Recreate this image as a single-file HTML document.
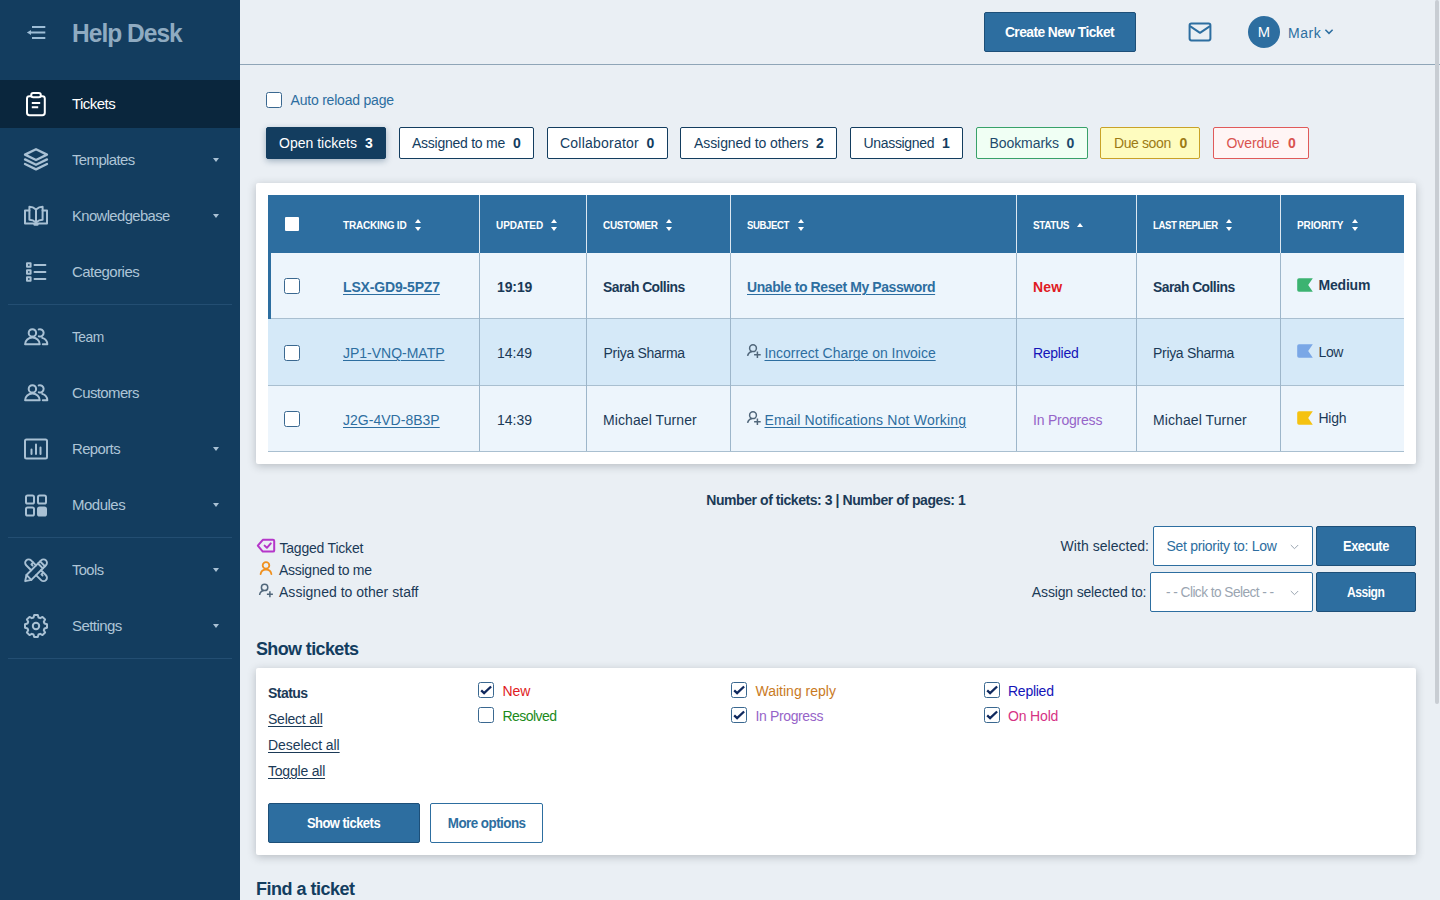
<!DOCTYPE html>
<html lang="en">
<head>
<meta charset="utf-8">
<title>Help Desk - Tickets</title>
<style>
*{box-sizing:border-box;margin:0;padding:0}
html,body{width:1440px;height:900px;overflow:hidden}
body{font-family:"Liberation Sans",sans-serif;font-size:14px;color:#1b3a57;background:#eaeff4;position:relative}
.abs{position:absolute}
.x{display:inline-block;white-space:nowrap}
/* ---------- sidebar ---------- */
#side{position:absolute;left:0;top:0;width:240px;height:900px;background:#133d5f}
#side .logo{position:absolute;left:72px;top:16px;font-size:26px;font-weight:bold;color:#8fabc1;line-height:34px;white-space:nowrap}
#side .item{position:absolute;left:0;width:240px;height:48px;color:#aec5d7;font-size:15px;line-height:48px}
#side .item>span{position:absolute;left:72px;top:0;white-space:nowrap}
#side .item.on{background:#0a263d;color:#fff}
#side .item svg{position:absolute;left:22px;top:10px;width:28px;height:28px;fill:none;stroke:#a9c1d4;stroke-width:2;stroke-linecap:round;stroke-linejoin:round}
#side .item.on svg{stroke:#fff}
#side .car{position:absolute;left:213px;top:22px;width:0;height:0;border-left:3.5px solid transparent;border-right:3.5px solid transparent;border-top:4px solid #a9c1d4}
#side .sep{position:absolute;left:8px;width:224px;height:1px;background:#234e72}
/* ---------- header ---------- */
#hdr{position:absolute;left:240px;top:0;width:1200px;height:65px;border-bottom:1px solid #8fa5b7}
.btn{position:absolute;background:#2d6ea0;border:1px solid #1d4f78;color:#fff;font-weight:bold;font-size:14px;text-align:center;border-radius:2px;white-space:nowrap}
/* ---------- main ---------- */
.cb{position:absolute;width:16px;height:16px;background:#fff;border:1px solid #3a6890;border-radius:2.5px}
.fb{position:absolute;top:127px;height:32px;border:1px solid #133d5f;background:#fff;color:#133d5f;font-size:14px;line-height:30px;border-radius:2px;white-space:nowrap}
.fb .x{position:absolute;top:0}
.fb b{position:absolute;top:0}
.card{position:absolute;background:#fff;border-radius:2px;box-shadow:0 2px 8px rgba(30,38,46,.25)}
#tbl{position:absolute;left:268px;top:195px;width:1136px;height:257px}
#tbl .th{position:absolute;left:0;top:0;width:1136px;height:58px;background:#2d6ea0}
#tbl .h{position:absolute;top:1px;height:58px;line-height:60px;color:#fff;font-size:10px;font-weight:bold;white-space:nowrap}
#tbl .row{position:absolute;left:0;width:1136px;border-bottom:1px solid #a9bfd0}
#tbl .c{position:absolute;white-space:nowrap;font-size:14px;line-height:20px;color:#1b3a57}
#tbl a{color:#2d6ea0}
#tbl a .x,.lnk .x{text-decoration:underline;text-underline-offset:2px;text-decoration-thickness:1px}
#tbl .vl{position:absolute;top:0;width:1px;background:#9db6ca}
#tbl .vh{position:absolute;top:0;width:1px;height:58px;background:#dbe7f1}
.srt{position:absolute;top:24px;width:7px;height:12px}
.srt:before{content:"";position:absolute;left:0;top:0;border-left:3.5px solid transparent;border-right:3.5px solid transparent;border-bottom:4.5px solid #fff}
.srt:after{content:"";position:absolute;left:0;top:7.5px;border-left:3.5px solid transparent;border-right:3.5px solid transparent;border-top:4.5px solid #fff}
.flag{position:absolute;width:16px;height:14px}
.t14{position:absolute;font-size:14px;line-height:20px;white-space:nowrap;color:#1b3a57}
.sel{position:absolute;height:40px;background:#fff;border:1px solid #2d6ea0;border-radius:2px;font-size:14px;line-height:38px;white-space:nowrap}
.sel .x{position:absolute;top:0}
.sel svg{position:absolute;top:16px}
.h2{position:absolute;font-size:18px;font-weight:bold;color:#133d5f;white-space:nowrap;line-height:24px}
.lnk{position:absolute;left:268px;font-size:14px;color:#1b3a57;text-decoration:underline;text-underline-offset:2px;line-height:20px;white-space:nowrap}
.ck{position:absolute;width:16px;height:16px;background:#fff;border:1px solid #3a6890;border-radius:2.5px}
.ck svg{position:absolute;left:-1px;top:-1px;width:16px;height:16px}
.sl{position:absolute;font-size:14px;line-height:20px;white-space:nowrap}
</style>
</head>
<body>
<div id="side">
  <svg class="abs" style="left:24px;top:20px" width="24" height="24" viewBox="0 0 24 24" fill="none" stroke="#9dbdd6" stroke-width="2" stroke-linecap="butt"><path d="M8 7H21.3M6 12.5H21.3M8 18H21.3"/><path d="M7 9.9V15.1L2.9 12.5Z" fill="#9dbdd6" stroke="none"/></svg>
  <div class="logo"><span class="x" style="letter-spacing:-1.02px;transform:scaleX(0.942);transform-origin:left center;margin-right:1.02px">Help Desk</span></div>

  <div class="item on" style="top:80px"><svg viewBox="0 0 28 28" style="top:9px"><rect x="5" y="7.2" width="17.8" height="19" rx="2.4"/><rect x="9.2" y="4" width="9.6" height="4.3" rx="2" fill="#0a263d"/><path d="M9.8 14H18.2M9.8 18.2H16.2" stroke-linecap="butt"/></svg><span><span class="x" style="letter-spacing:-0.54px;margin-right:0.54px">Tickets</span></span></div>
  <div class="item" style="top:136px"><svg viewBox="0 0 28 28"><path d="M14 3.2L25 8.6L14 14L3 8.6Z" stroke-width="2.3"/><path d="M3 13.4L14 18.8L25 13.4" stroke-width="2.3"/><path d="M3 18L14 23.4L25 18" stroke-width="2.3"/></svg><span><span class="x" style="letter-spacing:-0.59px;transform:scaleX(0.994);transform-origin:left center;margin-right:0.59px">Templates</span></span><i class="car"></i></div>
  <div class="item" style="top:192px"><svg viewBox="0 0 28 28"><path d="M14 7.5Q11 4.8 7.4 4.8V17.8Q11 17.8 14 20.4Q17 17.8 20.6 17.8V4.8Q17 4.8 14 7.5ZM14 7.5V20.4"/><path d="M7.4 8.4H3V21.6H25V8.4H20.6"/><path d="M12.6 22.6H15.4" stroke-width="2.4"/></svg><span><span class="x" style="letter-spacing:-0.59px;transform:scaleX(0.986);transform-origin:left center;margin-right:0.59px">Knowledgebase</span></span><i class="car"></i></div>
  <div class="item" style="top:248px"><svg viewBox="0 0 28 28"><rect x="5" y="5.2" width="3.6" height="3.6"/><rect x="5" y="12.2" width="3.6" height="3.6"/><rect x="5" y="19.2" width="3.6" height="3.6"/><path d="M12.5 7H23.4M12.5 14H23.4M12.5 21H23.4"/></svg><span><span class="x" style="letter-spacing:-0.54px;margin-right:0.54px">Categories</span></span></div>
  <div class="sep" style="top:304px"></div>
  <div class="item" style="top:313px"><svg viewBox="0 0 28 28"><circle cx="10.4" cy="9.9" r="3.7"/><path d="M3.1 21.3A7.3 6.8 0 0 1 17.7 21.3Z"/><path d="M16.7 6.4A3.7 3.7 0 1 1 16.8 13.4"/><path d="M20.2 14.9A7.3 6.8 0 0 1 25.3 21.3H20.8"/></svg><span><span class="x" style="letter-spacing:-0.59px;transform:scaleX(0.922);transform-origin:left center;margin-right:0.59px">Team</span></span></div>
  <div class="item" style="top:369px"><svg viewBox="0 0 28 28"><circle cx="10.4" cy="9.9" r="3.7"/><path d="M3.1 21.3A7.3 6.8 0 0 1 17.7 21.3Z"/><path d="M16.7 6.4A3.7 3.7 0 1 1 16.8 13.4"/><path d="M20.2 14.9A7.3 6.8 0 0 1 25.3 21.3H20.8"/></svg><span><span class="x" style="letter-spacing:-0.59px;transform:scaleX(0.995);transform-origin:left center;margin-right:0.59px">Customers</span></span></div>
  <div class="item" style="top:425px"><svg viewBox="0 0 28 28"><rect x="3" y="4.5" width="22" height="19" rx="1.5"/><path d="M9.5 19V14.5M14 19V9.5M18.5 19V12.5"/></svg><span><span class="x" style="letter-spacing:-0.59px;transform:scaleX(0.992);transform-origin:left center;margin-right:0.59px">Reports</span></span><i class="car"></i></div>
  <div class="item" style="top:481px"><svg viewBox="0 0 28 28"><rect x="4" y="4.5" width="8" height="8" rx="1.6"/><rect x="16" y="4.5" width="8" height="8" rx="1.6"/><rect x="4" y="16.5" width="8" height="8" rx="1.6"/><rect x="16" y="16.5" width="8" height="8" rx="1.6" fill="#a9c1d4"/></svg><span><span class="x" style="letter-spacing:-0.50px;margin-right:0.50px">Modules</span></span><i class="car"></i></div>
  <div class="sep" style="top:537px"></div>
  <div class="item" style="top:546px"><svg viewBox="0 0 28 28"><g transform="translate(0.7 0.9) scale(0.955)"><path d="M2.6 25.4L3.95 18.95L19.25 3.65A3.6 3.6 0 0 1 24.35 8.75L9.05 24.05Z"/><path d="M3.95 18.95L9.05 24.05"/><path d="M16 6.9L21.1 12M18.2 4.7L23.3 9.8"/><path d="M14 8.9L8.75 3.65A3.6 3.6 0 0 0 3.65 8.75L8.9 14"/><path d="M19.1 14L24.35 19.25A3.6 3.6 0 0 1 19.25 24.35L14 19.1"/><path d="M11 5.9L9.1 7.8L10.3 9"/><path d="M21.5 16.4L19.6 18.3L20.8 19.5"/></g></svg><span><span class="x" style="letter-spacing:-0.59px;transform:scaleX(0.979);transform-origin:left center;margin-right:0.59px">Tools</span></span><i class="car"></i></div>
  <div class="item" style="top:602px"><svg viewBox="0 0 28 28"><circle cx="14" cy="14" r="3.2"/><path d="M11.5 5.5L12.2 3.0L15.8 3.0L16.5 5.5L18.2 6.2L20.5 4.9L23.1 7.5L21.8 9.8L22.5 11.5L25.0 12.2L25.0 15.8L22.5 16.5L21.8 18.2L23.1 20.5L20.5 23.1L18.2 21.8L16.5 22.5L15.8 25.0L12.2 25.0L11.5 22.5L9.8 21.8L7.5 23.1L4.9 20.5L6.2 18.2L5.5 16.5L3.0 15.8L3.0 12.2L5.5 11.5L6.2 9.8L4.9 7.5L7.5 4.9L9.8 6.2Z"/></svg><span><span class="x" style="letter-spacing:-0.56px;margin-right:0.56px">Settings</span></span><i class="car"></i></div>
  <div class="sep" style="top:658px"></div>
</div>
<div id="hdr">
  <div class="btn" style="left:744px;top:12px;width:152px;height:40px;line-height:38px"><span class="x" style="letter-spacing:-0.55px;transform:scaleX(0.983);transform-origin:center center;margin-right:0.55px">Create New Ticket</span></div>
  <svg class="abs" style="left:948px;top:20px" width="24" height="24" viewBox="0 0 24 24" fill="none" stroke="#2d6ea0" stroke-width="2" stroke-linejoin="round"><rect x="1.6" y="3.6" width="20.8" height="16.8" rx="1.8"/><path d="M2 6.2L12 12.8L22 6.2"/></svg>
  <div class="abs" style="left:1008px;top:16px;width:32px;height:32px;border-radius:50%;background:#2d6ea0;color:#fff;text-align:center;line-height:33px;font-size:14px"><span class="x" style="letter-spacing:0.60px;transform:scaleX(1.054);transform-origin:center center;margin-right:-0.60px">M</span></div>
  <div class="abs" style="left:1048px;top:24px;color:#2d6ea0;font-size:14px;line-height:18px"><span class="x" style="letter-spacing:0.53px;margin-right:-0.53px">Mark</span></div>
  <svg class="abs" style="left:1084px;top:28px" width="10" height="8" viewBox="0 0 10 8" fill="none" stroke="#2d6ea0" stroke-width="1.5"><path d="M1.4 1.8L5 5.4L8.6 1.8"/></svg>
</div>

<!-- auto reload -->
<div class="cb" style="left:266px;top:92px"></div>
<div class="t14" style="left:290.5px;top:90px;color:#2d6ea0"><span class="x" style="letter-spacing:-0.21px;margin-right:0.21px">Auto reload page</span></div>

<!-- filter buttons -->
<div class="fb" style="left:266px;width:120px;background:#133d5f;color:#fff;box-shadow:0 2px 6px rgba(19,61,95,.35)"><span style="position:absolute;left:12px;top:0"><span class="x" style="letter-spacing:0.01px;margin-right:-0.01px">Open tickets</span></span><b style="left:98px">3</b></div>
<div class="fb" style="left:399px;width:135px"><span style="position:absolute;left:12px;top:0"><span class="x" style="letter-spacing:-0.25px;margin-right:0.25px">Assigned to me</span></span><b style="left:113px">0</b></div>
<div class="fb" style="left:547px;width:121px"><span style="position:absolute;left:12px;top:0"><span class="x" style="letter-spacing:0.22px;margin-right:-0.22px">Collaborator</span></span><b style="left:98.5px">0</b></div>
<div class="fb" style="left:680px;width:157px"><span style="position:absolute;left:13px;top:0"><span class="x" style="letter-spacing:-0.08px;margin-right:0.08px">Assigned to others</span></span><b style="left:135px">2</b></div>
<div class="fb" style="left:850px;width:113px"><span style="position:absolute;left:12.5px;top:0"><span class="x" style="letter-spacing:-0.32px;margin-right:0.32px">Unassigned</span></span><b style="left:91px">1</b></div>
<div class="fb" style="left:976px;width:112px;border-color:#38a169;background:#f0fff4;color:#1d4a6c"><span style="position:absolute;left:12.5px;top:0"><span class="x" style="letter-spacing:-0.08px;margin-right:0.08px">Bookmarks</span></span><b style="left:89.5px">0</b></div>
<div class="fb" style="left:1100px;width:100px;border-color:#c9a227;background:#fefcbf;color:#9c7a14"><span style="position:absolute;left:13px;top:0"><span class="x" style="letter-spacing:-0.39px;margin-right:0.39px">Due soon</span></span><b style="left:78.5px">0</b></div>
<div class="fb" style="left:1213px;width:96px;border-color:#e05a5a;background:#fff5f5;color:#d9534f"><span style="position:absolute;left:12.5px;top:0"><span class="x" style="letter-spacing:-0.10px;margin-right:0.10px">Overdue</span></span><b style="left:74px">0</b></div>

<!-- ticket table -->
<div class="card" style="left:256px;top:183px;width:1160px;height:281px"></div>
<div id="tbl">
  <div class="th"></div>
  <div class="row" style="top:58px;height:66px;background:#edf5fc"></div>
  <div class="row" style="top:124px;height:67px;background:#d5e9f8"></div>
  <div class="row" style="top:191px;height:66px;background:#edf5fc"></div>
  <div class="abs" style="left:0;top:58px;width:3px;height:66px;background:#2d6ea0"></div>
  <div class="vl" style="left:211px;height:256px"></div><div class="vl" style="left:318px;height:256px"></div><div class="vl" style="left:462px;height:256px"></div><div class="vl" style="left:748px;height:256px"></div><div class="vl" style="left:868px;height:256px"></div><div class="vl" style="left:1012px;height:256px"></div>
  <div class="vh" style="left:211px"></div><div class="vh" style="left:318px"></div><div class="vh" style="left:462px"></div><div class="vh" style="left:748px"></div><div class="vh" style="left:868px"></div><div class="vh" style="left:1012px"></div>

  <div class="abs" style="left:17px;top:22px;width:14px;height:14px;background:#fff;border-radius:1px"></div>
  <div class="h" style="left:75px"><span class="x" style="letter-spacing:-0.19px;margin-right:0.19px">TRACKING ID</span></div><i class="srt" style="left:146.5px"></i>
  <div class="h" style="left:228px"><span class="x" style="letter-spacing:-0.08px;margin-right:0.08px">UPDATED</span></div><i class="srt" style="left:282.5px"></i>
  <div class="h" style="left:335px"><span class="x" style="letter-spacing:-0.29px;margin-right:0.29px">CUSTOMER</span></div><i class="srt" style="left:397.5px"></i>
  <div class="h" style="left:479px"><span class="x" style="letter-spacing:-0.39px;transform:scaleX(0.956);transform-origin:left center;margin-right:0.39px">SUBJECT</span></div><i class="srt" style="left:529.5px"></i>
  <div class="h" style="left:764.5px"><span class="x" style="letter-spacing:-0.39px;transform:scaleX(0.993);transform-origin:left center;margin-right:0.39px">STATUS</span></div><i class="abs" style="left:808.5px;top:28px;border-left:3.5px solid transparent;border-right:3.5px solid transparent;border-bottom:4.5px solid #fff"></i>
  <div class="h" style="left:885px"><span class="x" style="letter-spacing:-0.39px;transform:scaleX(0.959);transform-origin:left center;margin-right:0.39px">LAST REPLIER</span></div><i class="srt" style="left:957.5px"></i>
  <div class="h" style="left:1029px"><span class="x" style="letter-spacing:-0.13px;margin-right:0.13px">PRIORITY</span></div><i class="srt" style="left:1083.5px"></i>

  <!-- row 1 -->
  <div class="cb" style="left:16px;top:83px"></div>
  <div class="c" style="left:75px;top:82px;font-weight:bold"><a><span class="x" style="letter-spacing:-0.16px;margin-right:0.16px">LSX-GD9-5PZ7</span></a></div>
  <div class="c" style="left:229px;top:82px;font-weight:bold"><span class="x" style="letter-spacing:-0.10px;margin-right:0.10px">19:19</span></div>
  <div class="c" style="left:335px;top:82px;font-weight:bold"><span class="x" style="letter-spacing:-0.55px;transform:scaleX(0.991);transform-origin:left center;margin-right:0.55px">Sarah Collins</span></div>
  <div class="c" style="left:479px;top:82px;font-weight:bold"><a><span class="x" style="letter-spacing:-0.41px;margin-right:0.41px">Unable to Reset My Password</span></a></div>
  <div class="c" style="left:765px;top:82px;font-weight:bold;color:#e01b24"><span class="x" style="letter-spacing:0.20px;margin-right:-0.20px">New</span></div>
  <div class="c" style="left:885px;top:82px;font-weight:bold"><span class="x" style="letter-spacing:-0.55px;transform:scaleX(0.991);transform-origin:left center;margin-right:0.55px">Sarah Collins</span></div>
  <svg class="flag" style="left:1029px;top:83px" viewBox="0 0 16 14"><path d="M2 0.2H15.8L11.2 7L15.8 13.8H2Q0.2 13.8 0.2 12V2Q0.2 0.2 2 0.2Z" fill="#3cb371"/></svg>
  <div class="c" style="left:1050.5px;top:80px;font-weight:bold"><span class="x" style="letter-spacing:-0.20px;margin-right:0.20px">Medium</span></div>
  <!-- row 2 -->
  <div class="cb" style="left:16px;top:150px"></div>
  <div class="c" style="left:75px;top:148px"><a><span class="x" style="letter-spacing:-0.01px;margin-right:0.01px">JP1-VNQ-MATP</span></a></div>
  <div class="c" style="left:229px;top:148px"><span class="x" style="letter-spacing:-0.01px;margin-right:0.01px">14:49</span></div>
  <div class="c" style="left:335.5px;top:148px"><span class="x" style="letter-spacing:-0.29px;margin-right:0.29px">Priya Sharma</span></div>
  <svg class="abs" style="left:478px;top:148px" width="16" height="16" viewBox="0 0 16 16" fill="none" stroke="#50667a" stroke-width="1.5" stroke-linecap="butt"><circle cx="7" cy="5.2" r="3.4"/><path d="M6 8.5Q2.4 9.2 1.6 12.9"/><path d="M11.4 8.5V15M8.1 11.75H14.7"/></svg>
  <div class="c" style="left:496.5px;top:148px"><a><span class="x" style="letter-spacing:-0.03px;margin-right:0.03px">Incorrect Charge on Invoice</span></a></div>
  <div class="c" style="left:765px;top:148px;color:#1414b8"><span class="x" style="letter-spacing:-0.30px;margin-right:0.30px">Replied</span></div>
  <div class="c" style="left:885px;top:148px"><span class="x" style="letter-spacing:-0.31px;margin-right:0.31px">Priya Sharma</span></div>
  <svg class="flag" style="left:1029px;top:149px" viewBox="0 0 16 14"><path d="M2 0.2H15.8L11.2 7L15.8 13.8H2Q0.2 13.8 0.2 12V2Q0.2 0.2 2 0.2Z" fill="#7aa7e6"/></svg>
  <div class="c" style="left:1050.5px;top:147px"><span class="x" style="letter-spacing:-0.39px;margin-right:0.39px">Low</span></div>
  <!-- row 3 -->
  <div class="cb" style="left:16px;top:216px"></div>
  <div class="c" style="left:75px;top:215px"><a><span class="x" style="letter-spacing:0.02px;margin-right:-0.02px">J2G-4VD-8B3P</span></a></div>
  <div class="c" style="left:229px;top:215px"><span class="x" style="letter-spacing:-0.01px;margin-right:0.01px">14:39</span></div>
  <div class="c" style="left:335px;top:215px"><span class="x" style="letter-spacing:0.09px;margin-right:-0.09px">Michael Turner</span></div>
  <svg class="abs" style="left:478px;top:215px" width="16" height="16" viewBox="0 0 16 16" fill="none" stroke="#50667a" stroke-width="1.5" stroke-linecap="butt"><circle cx="7" cy="5.2" r="3.4"/><path d="M6 8.5Q2.4 9.2 1.6 12.9"/><path d="M11.4 8.5V15M8.1 11.75H14.7"/></svg>
  <div class="c" style="left:496.5px;top:215px"><a><span class="x" style="letter-spacing:0.19px;margin-right:-0.19px">Email Notifications Not Working</span></a></div>
  <div class="c" style="left:765px;top:215px;color:#9664c8"><span class="x" style="letter-spacing:-0.22px;margin-right:0.22px">In Progress</span></div>
  <div class="c" style="left:885px;top:215px"><span class="x" style="letter-spacing:0.09px;margin-right:-0.09px">Michael Turner</span></div>
  <svg class="flag" style="left:1029px;top:216px" viewBox="0 0 16 14"><path d="M2 0.2H15.8L11.2 7L15.8 13.8H2Q0.2 13.8 0.2 12V2Q0.2 0.2 2 0.2Z" fill="#f5c211"/></svg>
  <div class="c" style="left:1050.5px;top:213px"><span class="x" style="letter-spacing:-0.27px;margin-right:0.27px">High</span></div>
</div>

<div class="t14" style="left:636px;top:490px;width:400px;text-align:center;font-weight:bold"><span class="x" style="letter-spacing:-0.44px;margin-right:0.44px">Number of tickets: 3 | Number of pages: 1</span></div>

<!-- legend -->
<svg class="abs" style="left:256px;top:538px" width="20" height="16" viewBox="0 0 20 16" fill="none" stroke="#b536c9" stroke-width="2" stroke-linejoin="round" stroke-linecap="round"><path d="M6.8 1.8H17Q18.2 1.8 18.2 3V12.4Q18.2 13.6 17 13.6H6.8L1.8 7.7Z"/><path d="M8.6 7.6L10.9 9.8L14.8 5.4"/></svg>
<svg class="abs" style="left:258px;top:560px" width="16" height="16" viewBox="0 0 16 16" fill="none" stroke="#f0901e" stroke-width="1.8" stroke-linecap="round"><circle cx="8" cy="5.4" r="3.3"/><path d="M2.6 14.2Q3.2 9.6 8 9.6Q12.8 9.6 13.4 14.2"/></svg>
<svg class="abs" style="left:258px;top:582px" width="16" height="16" viewBox="0 0 16 16" fill="none" stroke="#50667a" stroke-width="1.5" stroke-linecap="butt"><circle cx="6.6" cy="5.4" r="3.2"/><path d="M5.6 8.6Q2.2 9.3 1.6 13"/><path d="M11.9 9.2V15.2M8.9 12.2H14.9"/></svg>
<div class="t14" style="left:279.5px;top:538px"><span class="x" style="letter-spacing:-0.21px;margin-right:0.21px">Tagged Ticket</span></div>
<div class="t14" style="left:279px;top:560px"><span class="x" style="letter-spacing:-0.27px;margin-right:0.27px">Assigned to me</span></div>
<div class="t14" style="left:279px;top:582px"><span class="x" style="letter-spacing:0.02px;margin-right:-0.02px">Assigned to other staff</span></div>

<!-- bulk actions -->
<div class="t14" style="left:949px;top:536px;width:200px;text-align:right"><span class="x" style="letter-spacing:0.04px;margin-right:-0.04px">With selected:</span></div>
<div class="sel" style="left:1153px;top:526px;width:160px;color:#2d6ea0"><span style="position:absolute;left:12.5px;top:0"><span class="x" style="letter-spacing:-0.30px;margin-right:0.30px">Set priority to: Low</span></span><svg style="left:135.5px;top:17px" width="9" height="6" viewBox="0 0 9 6" fill="none" stroke="#9aa5b1" stroke-width="1"><path d="M0.8 1L4.5 4.7L8.2 1"/></svg></div>
<div class="btn" style="left:1316px;top:526px;width:100px;height:40px;line-height:38px"><span class="x" style="letter-spacing:-0.55px;transform:scaleX(0.917);transform-origin:center center;margin-right:0.55px">Execute</span></div>
<div class="t14" style="left:946.5px;top:582px;width:200px;text-align:right"><span class="x" style="letter-spacing:-0.16px;margin-right:0.16px">Assign selected to:</span></div>
<div class="sel" style="left:1150px;top:572px;width:163px;color:#9aa5b1"><span style="position:absolute;left:14.5px;top:0"><span class="x" style="letter-spacing:-0.55px;transform:scaleX(0.976);transform-origin:left center;margin-right:0.55px">- - Click to Select - -</span></span><svg style="left:138.5px;top:17px" width="9" height="6" viewBox="0 0 9 6" fill="none" stroke="#9aa5b1" stroke-width="1"><path d="M0.8 1L4.5 4.7L8.2 1"/></svg></div>
<div class="btn" style="left:1316px;top:572px;width:100px;height:40px;line-height:38px"><span class="x" style="letter-spacing:-0.55px;transform:scaleX(0.860);transform-origin:center center;margin-right:0.55px">Assign</span></div>

<!-- show tickets -->
<div class="h2" style="left:256px;top:637px"><span class="x" style="letter-spacing:-0.64px;margin-right:0.64px">Show tickets</span></div>
<div class="card" style="left:256px;top:668px;width:1160px;height:187px"></div>
<div class="t14" style="left:268px;top:683px;font-weight:bold"><span class="x" style="letter-spacing:-0.55px;margin-right:0.55px">Status</span></div>
<div class="lnk" style="top:709px"><span class="x" style="letter-spacing:-0.23px;margin-right:0.23px">Select all</span></div>
<div class="lnk" style="top:735px"><span class="x" style="letter-spacing:-0.06px;margin-right:0.06px">Deselect all</span></div>
<div class="lnk" style="top:761px"><span class="x" style="letter-spacing:-0.21px;margin-right:0.21px">Toggle all</span></div>

<div class="ck" style="left:478px;top:682px"><svg viewBox="0 0 16 16" fill="none" stroke="#10295e" stroke-width="2.3"><path d="M3.2 8.4L6.1 11.1L13.1 4.5"/></svg></div><div class="sl" style="left:502.5px;top:681px;color:#e01b24"><span class="x" style="letter-spacing:-0.06px;margin-right:0.06px">New</span></div>
<div class="ck" style="left:478px;top:707px"></div><div class="sl" style="left:502.5px;top:706px;color:#1a8a1a"><span class="x" style="letter-spacing:-0.54px;margin-right:0.54px">Resolved</span></div>
<div class="ck" style="left:731px;top:682px"><svg viewBox="0 0 16 16" fill="none" stroke="#10295e" stroke-width="2.3"><path d="M3.2 8.4L6.1 11.1L13.1 4.5"/></svg></div><div class="sl" style="left:755.5px;top:681px;color:#c97a1e"><span class="x" style="letter-spacing:-0.00px;margin-right:0.00px">Waiting reply</span></div>
<div class="ck" style="left:731px;top:707px"><svg viewBox="0 0 16 16" fill="none" stroke="#10295e" stroke-width="2.3"><path d="M3.2 8.4L6.1 11.1L13.1 4.5"/></svg></div><div class="sl" style="left:755.5px;top:706px;color:#9664c8"><span class="x" style="letter-spacing:-0.37px;margin-right:0.37px">In Progress</span></div>
<div class="ck" style="left:984px;top:682px"><svg viewBox="0 0 16 16" fill="none" stroke="#10295e" stroke-width="2.3"><path d="M3.2 8.4L6.1 11.1L13.1 4.5"/></svg></div><div class="sl" style="left:1008px;top:681px;color:#1414b8"><span class="x" style="letter-spacing:-0.26px;margin-right:0.26px">Replied</span></div>
<div class="ck" style="left:984px;top:707px"><svg viewBox="0 0 16 16" fill="none" stroke="#10295e" stroke-width="2.3"><path d="M3.2 8.4L6.1 11.1L13.1 4.5"/></svg></div><div class="sl" style="left:1008px;top:706px;color:#d63384"><span class="x" style="letter-spacing:-0.16px;margin-right:0.16px">On Hold</span></div>

<div class="btn" style="left:268px;top:803px;width:152px;height:40px;line-height:38px"><span class="x" style="letter-spacing:-0.55px;transform:scaleX(0.927);transform-origin:center center;margin-right:0.55px">Show tickets</span></div>
<div class="btn" style="left:430px;top:803px;width:113px;height:40px;line-height:38px;background:#fff;color:#2d6ea0;border-color:#2d6ea0"><span class="x" style="letter-spacing:-0.55px;transform:scaleX(0.957);transform-origin:center center;margin-right:0.55px">More options</span></div>

<div class="h2" style="left:256px;top:877px"><span class="x" style="letter-spacing:-0.50px;margin-right:0.50px">Find a ticket</span></div>

<!-- scrollbar -->
<div class="abs" style="left:1435px;top:0;width:4px;height:704px;background:#c8cdd3;border-radius:2px"></div>
</body>
</html>
